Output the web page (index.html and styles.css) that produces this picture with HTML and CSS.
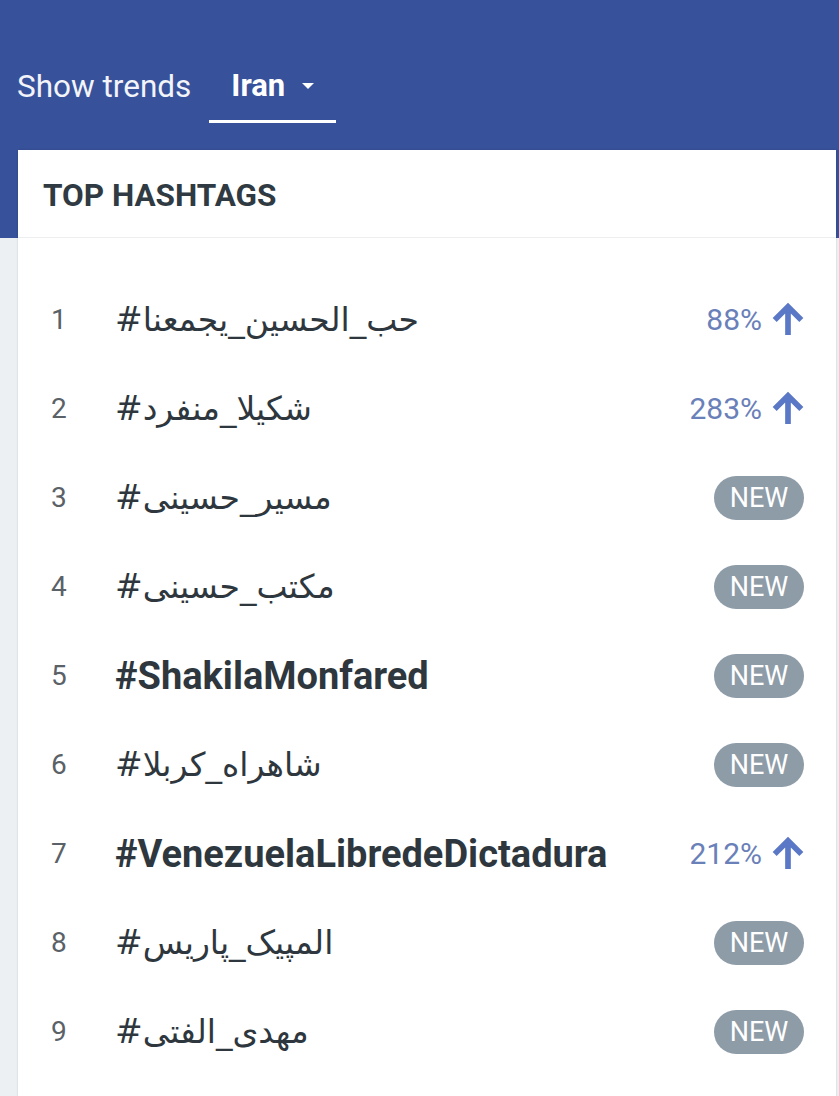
FILE: index.html
```html
<!DOCTYPE html>
<html lang="en">
<head>
<meta charset="utf-8">
<link rel="stylesheet" href="styles.css">
</head>
<body>
<div class="top">
  <div class="tabs">
    <span class="label">Show trends</span>
    <span class="tab">Iran <span class="caret"></span></span>
  </div>
</div>
<div class="card">
  <div class="card-head">TOP HASHTAGS</div>
  <ul class="list">
    <li class="row"><span class="num">1</span><span class="tag ar">#حب_الحسين_يجمعنا</span><span class="trend">88% <svg class="arrow" viewBox="0 0 24 24"><path d="M12 21V5M4 12l8-8 8 8"/></svg></span></li>
    <li class="row"><span class="num">2</span><span class="tag ar">#شکیلا_منفرد</span><span class="trend">283% <svg class="arrow" viewBox="0 0 24 24"><path d="M12 21V5M4 12l8-8 8 8"/></svg></span></li>
    <li class="row"><span class="num">3</span><span class="tag ar">#مسیر_حسینی</span><span class="badge">NEW</span></li>
    <li class="row"><span class="num">4</span><span class="tag ar">#مکتب_حسینی</span><span class="badge">NEW</span></li>
    <li class="row"><span class="num">5</span><span class="tag en">#ShakilaMonfared</span><span class="badge">NEW</span></li>
    <li class="row"><span class="num">6</span><span class="tag ar">#شاهراه_کربلا</span><span class="badge">NEW</span></li>
    <li class="row"><span class="num">7</span><span class="tag en">#VenezuelaLibredeDictadura</span><span class="trend">212% <svg class="arrow" viewBox="0 0 24 24"><path d="M12 21V5M4 12l8-8 8 8"/></svg></span></li>
    <li class="row"><span class="num">8</span><span class="tag ar">#المپیک_پاریس</span><span class="badge">NEW</span></li>
    <li class="row"><span class="num">9</span><span class="tag ar">#مهدی_الفتی</span><span class="badge">NEW</span></li>
  </ul>
</div>
</body>
</html>
```
FILE: styles.css
```css
html, body {
  margin: 0;
  padding: 0;
}
body {
  background: #edf0f3;
  font-family: Roboto, "DejaVu Sans", sans-serif;
  width: 839px;
  height: 1096px;
  overflow: hidden;
}
.top {
  background: #37519a;
  height: 238px;
}
.tabs {
  display: flex;
  align-items: flex-start;
  padding: 67px 0 0 17px;
  color: #fff;
}
.label {
  font-size: 31.5px;
  line-height: 40px;
  color: #f2f4f9;
}
.tab {
  margin-left: 18px;
  padding: 0 22px 0 22px;
  height: 56px;
  border-bottom: 3px solid #fff;
  font-size: 31px;
  line-height: 38px;
  font-weight: 700;
  display: flex;
  align-items: flex-start;
  box-sizing: border-box;
}
.caret {
  display: inline-block;
  width: 0;
  height: 0;
  margin: 16px 0 0 17px;
  border-left: 6px solid transparent;
  border-right: 6px solid transparent;
  border-top: 6px solid #fff;
}
.card {
  background: #fff;
  margin: -88px 3px 0 18px;
  box-shadow: 0 0 2px rgba(0,0,0,0.15);
  height: 960px;
}
.card-head {
  height: 88px;
  box-sizing: border-box;
  padding: 27px 0 0 25px;
  font-size: 31.5px;
  line-height: 38px;
  font-weight: 700;
  color: #2f3a42;
  border-bottom: 1px solid #eceef0;
}
.list {
  list-style: none;
  margin: 0;
  padding: 37px 0 0 0;
}
.row {
  display: flex;
  align-items: center;
  height: 89px;
}
.num {
  width: 97px;
  box-sizing: border-box;
  padding-left: 33px;
  font-size: 28px;
  color: #5a6167;
}
.tag {
  flex: 1;
  color: #2e373e;
  font-size: 30px;
}
.tag.ar {
  font-family: "DejaVu Sans", sans-serif;
  font-size: 33px;
}
.tag.en {
  font-weight: 700;
  font-size: 38px;
}
.trend {
  display: flex;
  align-items: center;
  margin-right: 28px;
  font-size: 30px;
  color: #6a80b9;
}
.arrow {
  width: 40px;
  height: 40px;
  margin-left: 6px;
  fill: none;
  stroke: #5a78c6;
  stroke-width: 3.4;
}
.badge {
  margin-right: 32px;
  width: 90px;
  height: 44px;
  border-radius: 22px;
  background: #8e9ca8;
  color: #fff;
  font-size: 27px;
  line-height: 44px;
  text-align: center;
}
```
